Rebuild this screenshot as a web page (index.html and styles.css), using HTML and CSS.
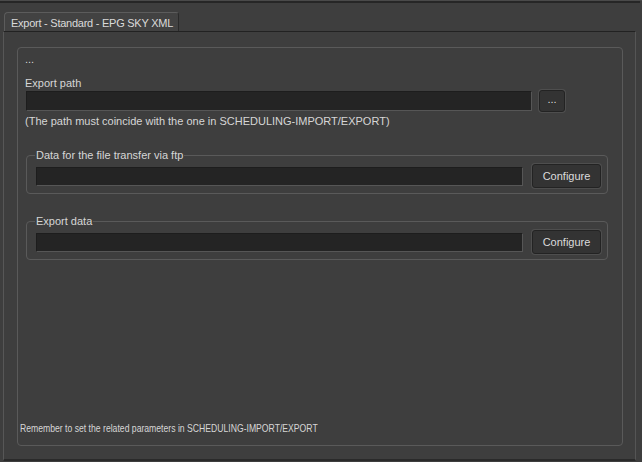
FILE: index.html
```html
<!DOCTYPE html>
<html>
<head>
<meta charset="utf-8">
<link rel="stylesheet" href="styles.css">
</head>
<body>
<div class="window">
  <div class="tabs">
    <div class="tab">Export - Standard - EPG SKY XML</div>
  </div>
  <div class="pane">
    <div class="frame">
      <div class="line dots">...</div>
      <div class="line label">Export path</div>
      <div class="row path-row">
        <div class="input path-input"></div>
        <button class="btn btn-small">...</button>
      </div>
      <div class="line note">(The path must coincide with the one in SCHEDULING-IMPORT/EXPORT)</div>
      <fieldset class="group group-ftp">
        <legend>Data for the file transfer via ftp</legend>
        <div class="row">
          <div class="input group-input"></div>
          <button class="btn btn-conf">Configure</button>
        </div>
      </fieldset>
      <fieldset class="group group-export">
        <legend>Export data</legend>
        <div class="row">
          <div class="input group-input"></div>
          <button class="btn btn-conf">Configure</button>
        </div>
      </fieldset>
      <div class="spacer"></div>
      <div class="line remember">Remember to set the related parameters in SCHEDULING-IMPORT/EXPORT</div>
    </div>
  </div>
</div>
</body>
</html>
```
FILE: styles.css
```css
html, body {
  margin: 0;
  padding: 0;
  background: #3e3e3e;
}
body {
  font-family: "Liberation Sans", Arial, sans-serif;
  font-size: 11px;
  color: #d6d6d6;
}
.window {
  width: 642px;
  height: 462px;
  box-sizing: border-box;
  border-top: 1px solid #4a4a4a;
  display: flex;
  flex-direction: column;
  background: #3e3e3e;
  overflow: hidden;
}
.window::before {
  content: "";
  display: block;
  height: 2px;
  background: #262626;
  margin-right: 2px;
}
.tabs {
  display: flex;
  padding-left: 4px;
  padding-top: 9px;
}
.tab {
  height: 19px;
  box-sizing: border-box;
  padding: 3px 5px 0 6px;
  line-height: 14px;
  background: #424242;
  border-top: 1px solid #5c5c5c;
  border-left: 1px solid #5c5c5c;
  border-right: 1px solid #2a2a2a;
  border-radius: 4px 3px 0 0;
  letter-spacing: -0.25px;
  color: #dadada;
}
.pane {
  height: 430px;
  box-sizing: border-box;
  margin-left: 3px;
  margin-right: 6px;
  border-top: 1px solid #222;
  border-left: 1px solid #575757;
  border-right: 1px solid #555;
  border-bottom: 2px solid #2a2a2a;
  padding: 15px 12px 13px 13px;
  display: flex;
}
.frame {
  flex: 1;
  border: 1px solid #5a5a5a;
  border-radius: 4px;
  display: flex;
  flex-direction: column;
  padding: 4px 14px 0 8px;
}
.line {
  line-height: 14px;
  white-space: nowrap;
}
.dots {
  margin-left: -1px;
}
.label {
  margin-top: 10px;
  margin-left: -1px;
}
.row {
  display: flex;
  align-items: center;
}
.path-row {
  height: 23px;
  margin-top: -1px;
}
.input {
  background: #242424;
  box-sizing: border-box;
  border-top: 1px solid #1d1d1d;
  border-left: 1px solid #1d1d1d;
  border-right: 1px solid #565656;
  border-bottom: 1px solid #565656;
}
.path-input {
  width: 506px;
  height: 20px;
}
.btn {
  font-family: "Liberation Sans", Arial, sans-serif;
  font-size: 11px;
  color: #dcdcdc;
  background: #333;
  border: 1px solid #232323;
  border-radius: 3px;
  box-shadow: 0 0 0 1px #4e4e4e;
  padding: 0;
  margin: 0;
  box-sizing: border-box;
  line-height: 14px;
}
.btn-small {
  width: 26px;
  height: 22px;
  margin-left: 7px;
  padding-bottom: 4px;
}
.note {
  margin-top: 2px;
  margin-left: -1px;
}
.group {
  margin: 20px 0 0 0;
  padding: 2px 6px 5px 9px;
  border: 1px solid #5a5a5a;
  border-radius: 4px;
  min-width: 0;
}
.group-export {
  margin-top: 20px;
}
.group legend {
  padding: 0 1px 0 1px;
  line-height: 14px;
  margin-left: -1px;
}
.group-input {
  flex: 1;
  height: 19px;
}
.btn-conf {
  width: 69px;
  height: 24px;
  margin-left: 9px;
}
.spacer {
  flex: 1;
}
.remember {
  margin-left: -6px;
  margin-bottom: 10px;
  transform: scaleX(0.785);
  transform-origin: left center;
}
```
